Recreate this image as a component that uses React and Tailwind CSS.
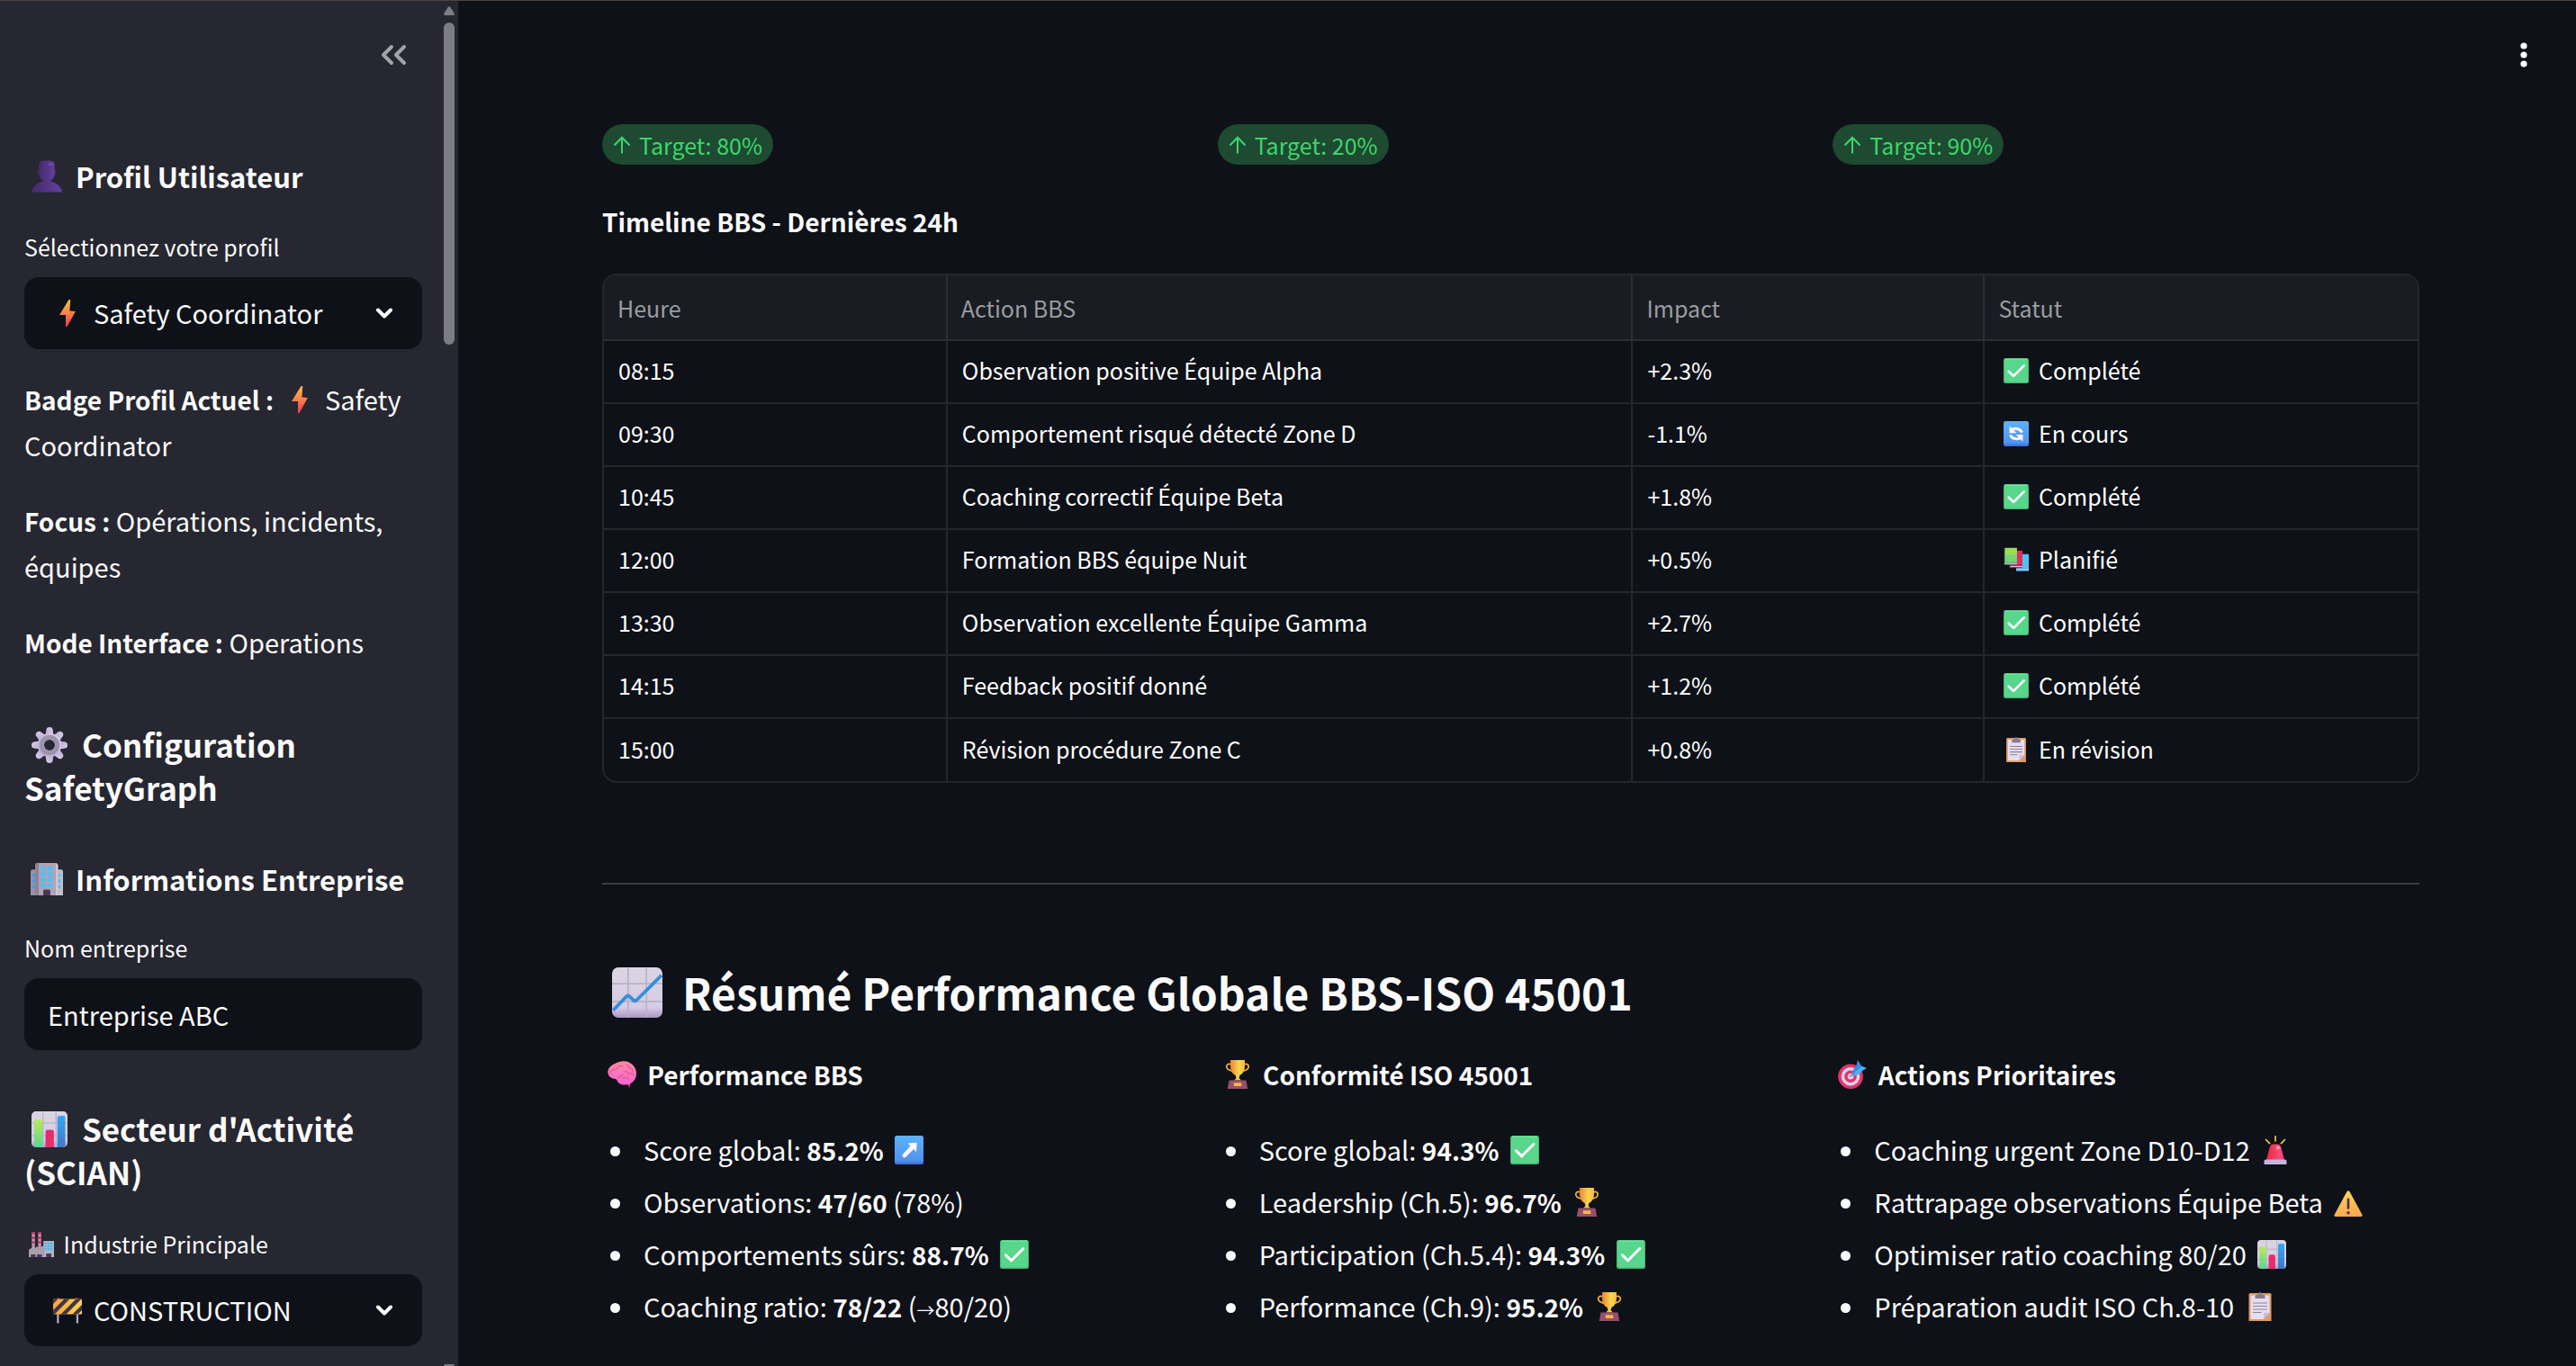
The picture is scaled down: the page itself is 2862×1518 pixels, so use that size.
import React, { useState } from "react";

/* ---------- Emoji artwork, all on a 32x32 grid ---------- */

const Bust = () => (
  <>
    <defs>
      <linearGradient id="bust" x1="0" y1="0" x2="1" y2="0">
        <stop offset="0" stopColor="#452a6b" />
        <stop offset="1" stopColor="#63409c" />
      </linearGradient>
    </defs>
    <path fill="url(#bust)" d="M1 31.5C1.500 26 8 20.500 16 20.500S30.500 26 31 31.500Z" />
    <path fill="#4c2f78" d="M7.500 9.500c-1.200.4-1.200 3.600.8 4.200zM24.500 9.500c1.200.4 1.200 3.600-.8 4.200z" />
    <path fill="url(#bust)" d="M8.200 4.500C8.200 2 10.500 0.500 13 0.500h6c2.500 0 4.800 1.500 4.800 4v8.500c0 4.500-3.300 8-7.800 8s-7.800-3.500-7.800-8Z" />
    <ellipse cx="20" cy="4" rx="2.600" ry="1" fill="#7450ac" />
  </>
);

const Bolt = () => (
  <>
    <defs>
      <linearGradient id="bolt" x1="0" y1="0" x2="0" y2="1">
        <stop offset="0.150" stopColor="#fdaf48" />
        <stop offset="0.500" stopColor="#fb8149" />
        <stop offset="1" stopColor="#f0325a" />
      </linearGradient>
    </defs>
    <path fill="url(#bolt)" d="M17.500 1h1.800l-.9 12.500 6.500.5-9.300 17h-1.700l.2-13H7z" />
  </>
);

const Gear = () => (
  <>
    <defs>
      <linearGradient id="gear" x1="1" y1="0" x2="0" y2="1">
        <stop offset="0" stopColor="#dcd3ea" />
        <stop offset="1" stopColor="#b6a4cf" />
      </linearGradient>
    </defs>
    <g fill="url(#gear)">
      {[0, 45, 90, 135, 180, 225, 270, 315].map((a) => (
        <path key={a} transform={`rotate(${a} 16 16)`} d="M12.200 8l1-6C13.500.6 14.700 0 16 0s2.500.6 2.800 2l1 6z" />
      ))}
      <path fillRule="evenodd" d="M16 5.500a10.500 10.500 0 1 0 0 21 10.500 10.500 0 0 0 0-21zm0 5.700a4.800 4.800 0 1 1 0 9.600 4.800 4.800 0 0 1 0-9.600z" />
    </g>
    <circle cx="16" cy="16" r="7" fill="none" stroke="#9d93ab" strokeWidth="4" />
  </>
);

const Office = () => (
  <>
    <path fill="#9d8fa4" d="M0 8.500Q0 6.500 2 6.500h6V32H0z" />
    <path fill="#c3bccb" d="M24 6.500h6q2 0 2 2V32h-8z" />
    <path fill="#b0a4b4" d="M4.500 2.500Q4.500 0 7 0h17.500q2.500 0 2.500 2.500V32H4.500z" />
    <path fill="#8f8299" d="M4.500 2.500Q4.500 0 7 0h1v32H4.500z" />
    <path fill="#d0c8d6" d="M25 .2q2 .3 2 2.300V32h-2z" />
    <g fill="#45c4fa">
      {[3.5, 9, 14.500, 20].map((y) => (
        <React.Fragment key={y}>
          <rect x="10" y={y} width="5" height="3.700" rx=".4" />
          <rect x="17" y={y} width="4.500" height="3.700" rx=".4" />
        </React.Fragment>
      ))}
      {[10.500, 16, 21.500].map((y) => (
        <React.Fragment key={y}>
          <rect x="1.800" y={y} width="2.700" height="3.400" fill="#3aa0ee" />
          <rect x="27.500" y={y} width="2" height="3.400" />
        </React.Fragment>
      ))}
    </g>
    <path fill="#4b3659" d="M12.500 32v-4.300q0-1.400 1.400-1.400h4.200q1.400 0 1.400 1.400V32z" />
  </>
);

const ChartFrame = ({ children }) => (
  <>
    <defs>
      <linearGradient id="frame" x1="0" y1="0" x2="0" y2="1">
        <stop offset="0" stopColor="#dad6e2" />
        <stop offset="0.800" stopColor="#d6cbe6" />
        <stop offset="1" stopColor="#a994c4" />
      </linearGradient>
    </defs>
    <rect width="32" height="32" rx="4" fill="url(#frame)" />
    <path d="M10.200.5v31M21.800.5v31M0 10.300h32M0 21.600h32" stroke="#b9b2c4" strokeWidth="1" />
    {children}
  </>
);

const BarChart = () => (
  <ChartFrame>
    <defs>
      <linearGradient id="bg" x1="0" y1="0" x2="0" y2="1">
        <stop offset="0" stopColor="#b9ec52" />
        <stop offset="1" stopColor="#55d697" />
      </linearGradient>
      <linearGradient id="bb" x1="0" y1="0" x2="0" y2="1">
        <stop offset="0" stopColor="#37a6f6" />
        <stop offset="1" stopColor="#3c79cc" />
      </linearGradient>
    </defs>
    <path fill="url(#bg)" d="M2.300 9q0-1.700 1.700-1.700h4q1.700 0 1.700 1.700v23H4q-1.700-.5-1.700-2z" />
    <path fill="#e52d6c" d="M12.500 18q0-1.700 1.700-1.700h4q1.700 0 1.700 1.700v14h-7.400z" />
    <path fill="url(#bb)" d="M23 5.700q0-1.700 1.700-1.700h3.600q1.700 0 1.700 1.700V30q-.5 2-2 2h-5z" />
  </ChartFrame>
);

const LineChart = () => (
  <ChartFrame>
    <path d="M.7 27.300L9 18.600q1.200-1.200 2.300 0l2.200 2.200q1.300 1 2.500-.4L31.400 5" fill="none" stroke="#348fdd" strokeWidth="2.200" />
  </ChartFrame>
);

const Factory = () => (
  <>
    <g stroke="#b8b1bf" strokeWidth="3.600">
      <path d="M5.800 1v22M13.800 1v22" />
      <path stroke="#d62f6a" strokeDasharray="3.200 2.600" d="M5.800 0v18M13.800 0v18" />
    </g>
    <path fill="#a9a0ad" d="M0 22.500l5.500-3.500v3l6-4v3.500l7-4V32H0z" />
    <path fill="#aeb6c3" d="M18.500 11.500H32V32H18.500z" />
    <g fill="#3cbdf8">
      {[13.500, 17, 20.500].map((y) => (
        <React.Fragment key={y}>
          <rect x="20.500" y={y} width="2.600" height="2.400" />
          <rect x="24" y={y} width="2.600" height="2.400" />
          <rect x="27.500" y={y} width="2.600" height="2.400" />
        </React.Fragment>
      ))}
    </g>
    <path fill="#4b3659" d="M2.500 28.500h6V32h-6zM10.500 28.500h6V32h-6zM22 27.500h6.500V32H22z" />
  </>
);

const Barrier = () => (
  <>
    <defs>
      <clipPath id="board">
        <rect y="3.500" width="32" height="17" rx="1" />
      </clipPath>
      <linearGradient id="yl" x1="0" y1="0" x2="1" y2="0">
        <stop offset="0" stopColor="#fba43c" />
        <stop offset="1" stopColor="#fbd94a" />
      </linearGradient>
    </defs>
    <path fill="#b5a3c4" d="M4.200 20h2.300v10.500H4.200zM25.800 20h2.300v10.500h-2.300z" />
    <path fill="#c6275f" d="M4 4q0-2 1.800-2t1.800 2zM24.400 4q0-2 1.800-2T28 4z" />
    <rect y="3.500" width="32" height="17" rx="1" fill="url(#yl)" />
    <g clipPath="url(#board)" stroke="#43344f" strokeWidth="4.300">
      <path d="M-8 16L12-4M-3 24L21 0M8 26L34 0M19 28L45 2" transform="translate(-1 -1)" />
    </g>
  </>
);

const Check = () => (
  <>
    <rect width="32" height="32" rx="2.500" fill="#43b577" />
    <rect x="1" y="1" width="30" height="29.500" rx="2" fill="#58d68c" />
    <path d="M2 1.200h28" stroke="#6aea9c" strokeWidth="1.400" />
    <path d="M6.500 16.800l6.300 6 13-13.300" fill="none" stroke="#fff" strokeWidth="3" strokeLinecap="round" strokeLinejoin="round" />
  </>
);

const BlueTile = ({ children }) => (
  <>
    <defs>
      <linearGradient id="tile" x1="0" y1="0" x2="0" y2="1">
        <stop offset="0" stopColor="#5db2fa" />
        <stop offset="0.850" stopColor="#4f95f0" />
        <stop offset="1" stopColor="#3f69d6" />
      </linearGradient>
    </defs>
    <rect width="32" height="32" rx="2.500" fill="url(#tile)" />
    {children}
  </>
);

const ArrowTile = () => (
  <BlueTile>
    <path fill="#fbf3ff" d="M14.500 8.500l9.500-.7q.7 0 .7.700l-.7 9.500-3-3-8.700 9q-1.500 1.300-3-.2t-.3-3l8.500-9.300z" />
  </BlueTile>
);

const SyncTile = () => (
  <BlueTile>
    <g fill="none" stroke="#fbf3ff" strokeWidth="3.400">
      <path d="M9 11.500c5-3.500 12-2.500 14.500 3" />
      <path d="M23 20.500c-5 3.500-12 2.500-14.500-3" />
    </g>
    <path fill="#fbf3ff" d="M7.500 6v9h9zM24.500 26v-9h-9z" />
  </BlueTile>
);

const Books = () => (
  <>
    <path fill="#42a8ec" d="M16 9h16v21.500H16z" />
    <path fill="#4fc3f5" d="M17 9h15v18H17z" />
    <path fill="#dcd3ea" d="M16 28h16v1.300H16z" />
    <path fill="#b52260" d="M7.500 5H24v21.500H7.500z" />
    <path fill="#e02d62" d="M9 4.500h15v18H9z" />
    <path fill="#f3c4d8" d="M8.500 24H24v1.200H8.500z" />
    <path fill="#4c9a6c" d="M1 1h16v21.500H1z" />
    <path fill="#9bdc52" d="M2 1h15v10H2z" />
    <path fill="#79d275" d="M2 10h15v9H2z" />
    <path fill="#dcd3ea" d="M1.500 20H17v1.200H1.500z" />
  </>
);

const Clipboard = () => (
  <>
    <path fill="#e09a62" d="M3.500 2.500q0-1.500 1.500-1.500h22q1.500 0 1.500 1.500V32h-25z" />
    <path fill="#e6def0" d="M5.500 3.500h21V23l-6.500 7H5.500z" />
    <path fill="#c9bcdc" d="M20 30v-7h6.500z" />
    <path stroke="#8d8498" strokeWidth="1.200" d="M8 12h16M8 15.500h16M8 19h16M8 22.500h9.500" />
    <path fill="#857d90" d="M10.500 7V4.500q0-1.500 1.500-1.500h1.500q.5-3 2.500-3t2.500 3H20q1.500 0 1.500 1.500V7z" />
  </>
);

const Brain = () => (
  <>
    <defs>
      <linearGradient id="brain" x1="0.500" y1="0" x2="0.400" y2="1">
        <stop offset="0" stopColor="#ff8aa2" />
        <stop offset="0.900" stopColor="#f865cf" />
      </linearGradient>
    </defs>
    <path fill="#ee3d8e" d="M20 24l4.500 6.500q1-4 .5-7z" />
    <path fill="url(#brain)" d="M16 1.500c8-1.500 16 5.500 16 13 0 6-3 10-7.500 12-4 1.800-9.500 1.500-12.500-1.500-2-2-1-3.500-3.500-4C4 20.500 0 17.500.3 13 .5 7.500 8 2.500 16 1.500z" />
    <path fill="none" stroke="#d8529b" strokeWidth="1.100" strokeLinecap="round" d="M3 15c0-4 4-5 7-5 2-3 5-4 7-3M12 20c1-2 4-2 5-4M21 5c3 1 2 4 4 4s3 2 3 4M19 13c2-1 4 0 4 2 3-1 5 0 6 2M17 20c3-1 6 0 7 2" />
  </>
);

const Trophy = () => (
  <>
    <defs>
      <linearGradient id="cup" x1="0" y1="0" x2="1" y2="0">
        <stop offset="0" stopColor="#ef7f38" />
        <stop offset="0.600" stopColor="#f9d84f" />
        <stop offset="1" stopColor="#fbb83f" />
      </linearGradient>
    </defs>
    <path fill="none" stroke="#f3b33e" strokeWidth="1.700" d="M9 4.800C5 3.500 3 5.500 4 8.500s4.500 3.500 7.500 4M23 4.800c4-1.300 6 .7 5 3.700s-4.500 3.500-7.500 4" />
    <path fill="url(#cup)" d="M8 0h16v7c0 5-2.500 8.500-5.500 9.700L17.500 20l2.500 2.500h-8l2.500-2.500-1-3.300C10.500 15.500 8 12 8 7z" />
    <path fill="#96506c" d="M6.500 22.500h19L27.200 32H4.800z" />
    <rect x="11.800" y="25.300" width="8.500" height="3.700" rx=".6" fill="#f5b54c" />
  </>
);

const Target = () => (
  <>
    <circle cx="14" cy="18.200" r="13.800" fill="#e3356b" />
    <circle cx="14" cy="18.200" r="10.300" fill="#dcd3ea" />
    <circle cx="14" cy="18.200" r="6.800" fill="#e3356b" />
    <circle cx="14" cy="18.200" r="3.300" fill="#dcd3ea" />
    <path stroke="#8a7a9a" strokeWidth="1.200" d="M13.500 18.500l6-6" />
    <path fill="#2f8fe4" d="M16 17q-.8-4.500 1.500-7l2.500-2.800L22 0l4 6.500z" />
    <path fill="#45b2f5" d="M16 17q4.500.8 7.500-1.500L27 12l5-3-6-2.500z" />
  </>
);

const Siren = () => (
  <>
    <path stroke="#f9c24a" strokeWidth="1.700" strokeLinecap="round" d="M16 .8V6M5.500 4.500l4 4.200M26.500 4.500l-4 4.200" />
    <defs>
      <linearGradient id="siren" x1="0" y1="0" x2="1" y2="0">
        <stop offset="0" stopColor="#e8253f" />
        <stop offset="0.700" stopColor="#fd4c6e" />
        <stop offset="1" stopColor="#f03a88" />
      </linearGradient>
    </defs>
    <path fill="url(#siren)" d="M9.500 13.500Q10.500 9.500 14 9.500h4q3.500 0 4.500 4L26 27H6z" />
    <circle cx="19" cy="13.500" r="1.700" fill="#ffb9c8" />
    <path fill="#c6b3e2" d="M3.500 28.500q0-2 2-2h21q2 0 2 2V32h-25z" />
  </>
);

const Warning = () => (
  <>
    <defs>
      <linearGradient id="warn" x1="0.300" y1="0" x2="0.500" y2="1">
        <stop offset="0" stopColor="#fcd65a" />
        <stop offset="1" stopColor="#fba650" />
      </linearGradient>
    </defs>
    <path fill="url(#warn)" d="M14.300 4.600q1.700-2.600 3.400 0L31.500 30q.7 2-1.500 2H2q-2.200 0-1.500-2z" />
    <path stroke="#43344f" strokeWidth="2.600" strokeLinecap="round" d="M16 12.800v9.700" />
    <circle cx="16" cy="27.700" r="1.700" fill="#43344f" />
  </>
);

const ART = {
  bust: [Bust, "Profil"],
  bolt: [Bolt, "Éclair"],
  gear: [Gear, "Engrenage"],
  office: [Office, "Immeuble"],
  bars: [BarChart, "Graphique à barres"],
  line: [LineChart, "Courbe"],
  factory: [Factory, "Usine"],
  barrier: [Barrier, "Chantier"],
  check: [Check, "Coche"],
  arrow: [ArrowTile, "En hausse"],
  sync: [SyncTile, "En boucle"],
  books: [Books, "Livres"],
  clip: [Clipboard, "Presse-papiers"],
  brain: [Brain, "Cerveau"],
  trophy: [Trophy, "Trophée"],
  target: [Target, "Cible"],
  siren: [Siren, "Alerte"],
  warning: [Warning, "Attention"],
};

const SIZES = {
  sm: "size-7 mx-[5px] align-[-4px]",
  md: "size-8 mx-1.5 align-[-4px]",
  lg: "size-9 mx-[7px] align-[-5px]",
  xl: "size-10 mx-2 align-[-6px]",
  xxl: "size-14 mx-[11px] align-[-8px]",
};

function Emoji({ name, size = "md" }) {
  const [Art, label] = ART[name];
  return (
    <svg viewBox="0 0 32 32" role="img" aria-label={label} className={`inline-block shrink-0 ${SIZES[size]}`}>
      <Art />
    </svg>
  );
}

const Strong = ({ children }) => <strong className="text-[28px] font-semibold leading-none">{children}</strong>;

/* ---------- Sidebar ---------- */

function SelectField({ id, label, icon, value, options, labelIcon }) {
  const [current, setCurrent] = useState(value);
  return (
    <div className="flex flex-col gap-4">
      <label htmlFor={id} className="text-[25px] leading-9">
        {labelIcon && <Emoji name={labelIcon} size="sm" />}
        {labelIcon && " "}
        {label}
      </label>
      <div className="grid items-center">
        <select
          id={id}
          value={current}
          onChange={(e) => setCurrent(e.target.value)}
          className="col-start-1 row-start-1 h-20 w-full appearance-none rounded-2xl bg-[#0e1117] pl-[77px] pr-16 text-[29px] text-[#fafafa] outline-none"
        >
          {options.map((o) => (
            <option key={o}>{o}</option>
          ))}
        </select>
        <span className="pointer-events-none col-start-1 row-start-1 flex items-center justify-between pl-[26px] pr-8">
          <Emoji name={icon} />
          <svg viewBox="0 0 20 12" className="h-3 w-5" fill="none" stroke="#fafafa" strokeWidth="4" strokeLinecap="round" strokeLinejoin="round" aria-hidden="true">
            <path d="M3 2.500l7 7 7-7" />
          </svg>
        </span>
      </div>
    </div>
  );
}

function Sidebar() {
  return (
    <aside className="flex w-[509px] shrink-0 overflow-hidden bg-[#262730]">
      <div className="min-w-0 flex-1 pl-[27px]">
        <div className="flex h-[173px] justify-end pr-10 pt-11">
          <button type="button" aria-label="Réduire le menu" className="size-8 text-[#a3a4a9]">
            <svg viewBox="0 0 32 32" className="size-8" fill="none" stroke="currentColor" strokeWidth="4" strokeLinecap="round" strokeLinejoin="round">
              <path d="M14 7L5 16l9 9M28 7L19 16l9 9" />
            </svg>
          </button>
        </div>
        <div className="mr-6">
          <h3 className="mb-[38px] text-[31px] font-semibold leading-[44px]">
            <Emoji name="bust" size="lg" /> Profil Utilisateur
          </h3>
          <SelectField
            id="profil"
            label="Sélectionnez votre profil"
            icon="bolt"
            value="Safety Coordinator"
            options={["Safety Coordinator"]}
          />
          <div className="mb-16 mt-[30px] flex flex-col gap-[33px] text-[29px] leading-[51px]">
            <p>
              <Strong>Badge Profil Actuel :</Strong> <Emoji name="bolt" /> Safety Coordinator
            </p>
            <p>
              <Strong>Focus :</Strong> Opérations, incidents, équipes
            </p>
            <p>
              <Strong>Mode Interface :</Strong> Operations
            </p>
          </div>
          <h2 className="mb-14 text-[35px] font-semibold leading-[48px]">
            <Emoji name="gear" size="xl" /> Configuration SafetyGraph
          </h2>
          <h3 className="mb-9 text-[31px] font-semibold leading-[44px]">
            <Emoji name="office" size="lg" /> Informations Entreprise
          </h3>
          <div className="mb-[63px] flex flex-col gap-4">
            <label htmlFor="entreprise" className="text-[25px] leading-9">
              Nom entreprise
            </label>
            <input
              id="entreprise"
              type="text"
              defaultValue="Entreprise ABC"
              className="h-20 w-full rounded-2xl bg-[#0e1117] px-[26px] text-[29px] text-[#fafafa] outline-none"
            />
          </div>
          <h2 className="mb-[38px] text-[35px] font-semibold leading-[48px]">
            <Emoji name="bars" size="xl" /> Secteur d'Activité (SCIAN)
          </h2>
          <SelectField
            id="industrie"
            label="Industrie Principale"
            labelIcon="factory"
            icon="barrier"
            value="CONSTRUCTION"
            options={["CONSTRUCTION"]}
          />
        </div>
      </div>
      <div className="mr-1 flex w-3 flex-col items-center pt-1.5" aria-hidden="true">
        <svg viewBox="0 0 12 10" className="mb-2 h-2.5 w-3 shrink-0" fill="#7c7c82">
          <path d="M4.500 1.200Q6-.8 7.500 1.200L11.500 7.500Q12.500 10 10.500 10h-9Q-.5 10 .5 7.500Z" />
        </svg>
        <div className="h-[358px] w-full rounded-full bg-[#7c7c82]" />
        <div className="mt-auto h-0.5 w-full rounded-t bg-[#7c7c82]" />
      </div>
    </aside>
  );
}

/* ---------- Main area ---------- */

const TARGETS = ["Target: 80%", "Target: 20%", "Target: 90%"];

const ROWS = [
  ["08:15", "Observation positive Équipe Alpha", "+2.3%", "check", "Complété"],
  ["09:30", "Comportement risqué détecté Zone D", "-1.1%", "sync", "En cours"],
  ["10:45", "Coaching correctif Équipe Beta", "+1.8%", "check", "Complété"],
  ["12:00", "Formation BBS équipe Nuit", "+0.5%", "books", "Planifié"],
  ["13:30", "Observation excellente Équipe Gamma", "+2.7%", "check", "Complété"],
  ["14:15", "Feedback positif donné", "+1.2%", "check", "Complété"],
  ["15:00", "Révision procédure Zone C", "+0.8%", "clip", "En révision"],
];

const SUMMARY = [
  {
    icon: "brain",
    title: "Performance BBS",
    items: [
      { text: "Score global:", value: "85.2%", icon: "arrow" },
      { text: "Observations:", value: "47/60", after: "(78%)" },
      { text: "Comportements sûrs:", value: "88.7%", icon: "check" },
      {
        text: "Coaching ratio:",
        value: "78/22",
        after: (
          <>
            (<span className="text-[20px] leading-none">→</span>80/20)
          </>
        ),
      },
    ],
  },
  {
    icon: "trophy",
    title: "Conformité ISO 45001",
    items: [
      { text: "Score global:", value: "94.3%", icon: "check" },
      { text: "Leadership (Ch.5):", value: "96.7%", icon: "trophy" },
      { text: "Participation (Ch.5.4):", value: "94.3%", icon: "check" },
      { text: "Performance (Ch.9):", value: "95.2%", icon: "trophy" },
    ],
  },
  {
    icon: "target",
    title: "Actions Prioritaires",
    items: [
      { text: "Coaching urgent Zone D10-D12", icon: "siren" },
      { text: "Rattrapage observations Équipe Beta", icon: "warning" },
      { text: "Optimiser ratio coaching 80/20", icon: "bars" },
      { text: "Préparation audit ISO Ch.8-10", icon: "clip" },
    ],
  },
];

function Timeline() {
  return (
    <div className="overflow-hidden rounded-2xl border-2 border-[#26272d]">
      <table className="w-full table-fixed border-collapse text-left text-[25px] leading-9">
        <colgroup>
          <col className="w-[18.9%]" />
          <col className="w-[37.8%]" />
          <col className="w-[19.4%]" />
          <col />
        </colgroup>
        <thead className="bg-[#1a1c23] text-[#9b9ca0]">
          <tr className="h-[72px] border-b-2 border-[#2c2e34]">
            {["Heure", "Action BBS", "Impact", "Statut"].map((h) => (
              <th key={h} scope="col" className="border-r-2 border-[#2c2e34] px-[15px] font-normal last:border-r-0">
                {h}
              </th>
            ))}
          </tr>
        </thead>
        <tbody className="text-white">
          {ROWS.map(([time, action, impact, icon, status]) => (
            <tr key={time} className="h-[70px] border-b-2 border-[#26272d] last:border-b-0">
              <td className="border-r-2 border-[#26272d] px-4 pb-1">{time}</td>
              <td className="border-r-2 border-[#26272d] px-4 pb-1">{action}</td>
              <td className="border-r-2 border-[#26272d] px-4 pb-1">{impact}</td>
              <td className="px-4 pb-1">
                <Emoji name={icon} size="sm" /> {status}
              </td>
            </tr>
          ))}
        </tbody>
      </table>
    </div>
  );
}

function Main() {
  return (
    <main className="relative min-w-0 flex-1 overflow-hidden pl-40 pr-[174px] pt-[137px]">
      <button type="button" aria-label="Menu principal" className="absolute right-[42px] top-11 size-8">
        <svg viewBox="0 0 32 32" className="size-8" fill="#fff">
          <circle cx="16" cy="6" r="3.600" />
          <circle cx="16" cy="16" r="3.600" />
          <circle cx="16" cy="26" r="3.600" />
        </svg>
      </button>

      <div className="grid grid-cols-3 gap-8">
        {TARGETS.map((t) => (
          <div key={t} className="flex">
            <span className="flex h-[45px] items-center gap-[9px] rounded-full bg-[#1d4a31] px-3 text-[25px] leading-9 text-[#3dd56d]">
              <svg viewBox="0 0 20 20" className="size-5" fill="none" stroke="currentColor" strokeWidth="2" aria-hidden="true">
                <path d="M10 19.500V2M1.500 10.500L10 1.700l8.500 8.800" />
              </svg>
              {t}
            </span>
          </div>
        ))}
      </div>

      <p className="mb-8 mt-[38px] text-[28px] font-semibold leading-[51px]">Timeline BBS - Dernières 24h</p>

      <Timeline />

      <hr className="mb-[85px] mt-[111px] border-t-2 border-[#3b3c42]" />

      <h2 className="text-[48px] font-semibold leading-[68px]">
        <Emoji name="line" size="xxl" /> Résumé Performance Globale BBS-ISO 45001
      </h2>

      <div className="mt-[33px] grid grid-cols-3 gap-8 text-[29px]">
        {SUMMARY.map((col) => (
          <section key={col.title}>
            <h3 className="mb-7 text-[28px] font-semibold leading-[51px]">
              <Emoji name={col.icon} /> {col.title}
            </h3>
            <ul className="pl-[9px]">
              {col.items.map((it) => (
                <li
                  key={it.text}
                  className="leading-[58px] before:mr-[26px] before:inline-block before:size-[11px] before:rounded-full before:bg-[#fafafa] before:align-[5px] before:content-['']"
                >
                  {it.text}
                  {it.value && " "}
                  {it.value && <Strong>{it.value}</Strong>}
                  {it.after && " "}
                  {it.after}
                  {it.icon && " "}
                  {it.icon && <Emoji name={it.icon} />}
                </li>
              ))}
            </ul>
          </section>
        ))}
      </div>
    </main>
  );
}

export default function App() {
  return (
    <div className="flex h-screen overflow-hidden border-t border-[#4e4242] bg-[#0e1117] font-['Noto_Sans_CJK_SC',sans-serif] text-[#fafafa]">
      <Sidebar />
      <Main />
    </div>
  );
}
